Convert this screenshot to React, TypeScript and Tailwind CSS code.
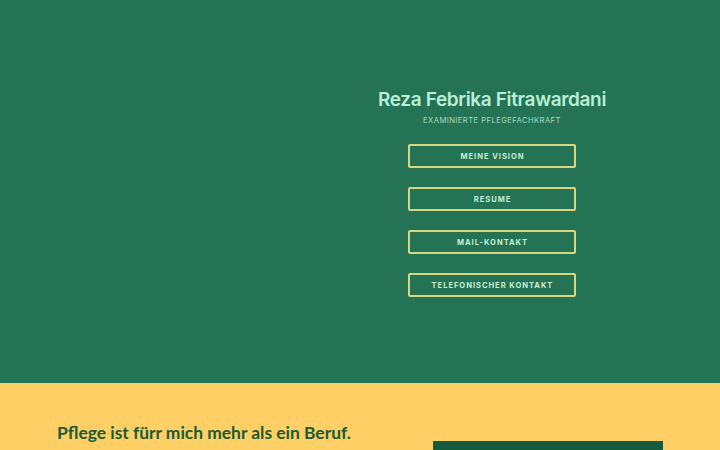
const buttons = ['Meine Vision', 'Resume', 'Mail-Kontakt', 'Telefonischer Kontakt'];

export default function App() {
  return (
    <div className="w-[720px] h-[450px] overflow-hidden" style={{ fontFamily: 'Inter, "Liberation Sans", sans-serif' }}>
      {/* Hero */}
      <section className="h-[383px] bg-[#247354] flex justify-center pl-[264px] pt-[88px]">
        <div className="flex flex-col items-center">
          <h1 className="text-[19px] font-semibold text-[#b9efd6] leading-[24px] tracking-[-0.35px]">
            Reza Febrika Fitrawardani
          </h1>
          <p className="mt-[3px] text-[7.6px] uppercase tracking-[0.45px] text-[#a6dcc0]">
            Examinierte Pflegefachkraft
          </p>
          <div className="mt-[18px] flex flex-col gap-[19px]">
            {buttons.map((b) => (
              <button
                key={b}
                className="w-[168px] ml-[1px] h-[24px] border-2 border-[#d8d57f] rounded-[2px] text-[7.6px] font-bold uppercase tracking-[0.95px] text-[#c6efd3]"
              >
                {b}
              </button>
            ))}
          </div>
        </div>
      </section>

      {/* Intro */}
      <section className="h-[67px] bg-[#fecf65] flex justify-between pl-[57px] pr-[57px] pt-[38px]">
        <h2
          className="text-[17.4px] font-bold text-[#1b5a33] leading-[24px]"
          style={{ fontFamily: 'Lato, "Liberation Sans", sans-serif' }}
        >
          Pflege ist fürr mich mehr als ein Beruf.
        </h2>
        <div className="w-[230px] h-[40px] mt-[20px] bg-[#135b3c]" />
      </section>
    </div>
  );
}
